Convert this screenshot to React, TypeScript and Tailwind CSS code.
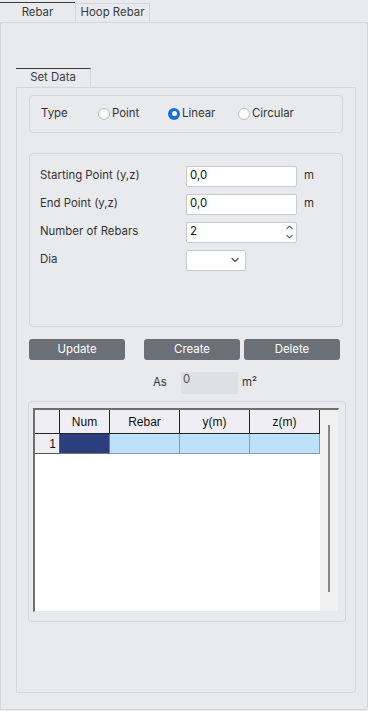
import { ChevronDown, ChevronUp } from "lucide-react"

const ui = "font-['Inter','Noto_Sans',sans-serif]"

function Radio({ label, checked }: { label: string; checked?: boolean }) {
  return (
    <label className="flex items-center gap-[2px]">
      {checked ? (
        <span className="w-[12px] h-[12px] rounded-full bg-[#1a6fe0] flex items-center justify-center">
          <span className="w-[5px] h-[5px] rounded-full bg-white" />
        </span>
      ) : (
        <span className="w-[12px] h-[12px] rounded-full bg-white border border-[#bcbcc0]" />
      )}
      <span>{label}</span>
    </label>
  )
}

function Field({ label, children }: { label: string; children: React.ReactNode }) {
  return (
    <div className="flex items-center h-[20px]">
      <span className="w-[146px] shrink-0">{label}</span>
      {children}
    </div>
  )
}

const cols = [
  { name: 'Num', w: 'w-[50px]' },
  { name: 'Rebar', w: 'w-[70px]' },
  { name: 'y(m)', w: 'w-[70px]' },
  { name: 'z(m)', w: 'w-[70px]' },
]

export default function App() {
  return (
    <div className={`w-[368px] h-[711px] bg-[#e9eaee] text-[11.4px] text-[#333] ${ui}`}>
      {/* Top tabs */}
      <div className="flex h-[22px] pt-[2px]">
        <div className="w-[75px] border-t-[1.5px] border-[#3a3a3a] bg-[#e9eaee] flex items-center justify-center text-[#3b3b40]">
          Rebar
        </div>
        <div className="w-[75px] mt-[1px] border border-b-0 border-[#d4d6db] flex items-center justify-center text-[#3b3b40]">
          Hoop Rebar
        </div>
      </div>

      {/* Outer panel */}
      <div className="h-[688px] border border-[#d4d6db] rounded-br-[4px] pl-[15px] pt-[45px]">
        <div className="w-[75px] h-[19px] border-t-[1.5px] border-[#3a3a3a] border-r border-r-[#d4d6db] flex items-center justify-center text-[#3b3b40]">
          Set Data
        </div>

        <div className="w-[340px] h-[606px] border border-[#d4d6db] rounded-br-[4px] pl-[12px] pt-[7px]">
          {/* Type */}
          <div className="w-[314px] h-[38px] border border-[#d4d6db] rounded-[4px] flex items-center pl-[11px]">
            <span className="w-[57px]">Type</span>
            <div className="w-[70px]"><Radio label="Point" /></div>
            <div className="w-[70px]"><Radio label="Linear" checked /></div>
            <Radio label="Circular" />
          </div>

          {/* Data */}
          <div className="mt-[20px] w-[314px] h-[174px] border border-[#d4d6db] rounded-[4px] pl-[10px] pt-[12px] flex flex-col gap-[8px]">
            <Field label="Starting Point (y,z)">
              <div className="w-[111px] h-[21px] bg-white border border-[#c9cbd0] rounded-[2px] px-[3px] flex items-center text-[#111]">0,0</div>
              <span className="ml-[7px]">m</span>
            </Field>
            <Field label="End Point (y,z)">
              <div className="w-[111px] h-[21px] bg-white border border-[#c9cbd0] rounded-[2px] px-[3px] flex items-center text-[#111]">0,0</div>
              <span className="ml-[7px]">m</span>
            </Field>
            <Field label="Number of Rebars">
              <div className="w-[111px] h-[21px] bg-white border border-[#c9cbd0] rounded-[2px] pl-[3px] flex items-center text-[#111]">
                <span className="flex-1">2</span>
                <span className="flex flex-col items-center pr-[1px] text-[#666]">
                  <ChevronUp size={11} strokeWidth={2.5} className="-mb-[2px]" />
                  <ChevronDown size={11} strokeWidth={2.5} />
                </span>
              </div>
            </Field>
            <Field label="Dia">
              <div className="w-[60px] h-[21px] bg-white border border-[#c9cbd0] rounded-[2px] flex items-center justify-end pr-[4px] text-[#555]">
                <ChevronDown size={12} strokeWidth={2.5} />
              </div>
            </Field>
          </div>

          {/* Buttons */}
          <div className="mt-[12px] flex h-[21px] text-white">
            <button className="w-[96px] rounded-[3px] bg-[#6b7077]">Update</button>
            <button className="ml-[19px] w-[96px] rounded-[3px] bg-[#6b7077]">Create</button>
            <button className="ml-[4px] w-[96px] rounded-[3px] bg-[#6b7077]">Delete</button>
          </div>

          {/* As */}
          <div className="mt-[12px] flex items-center h-[22px]">
            <span className="ml-[124px] w-[28px]">As</span>
            <div className="w-[57px] h-[22px] bg-[#dfe0e4] pl-[2px] text-[#555] leading-[14px]">0</div>
            <span className="ml-[4px]">m²</span>
          </div>

          {/* Table */}
          <div className="mt-[7px] -ml-[1px] w-[318px] h-[221px] border border-[#d4d6db] rounded-[4px] pl-[4px] pt-[6px]">
            <div className="w-[306px] h-[204px] bg-white border-t-2 border-l-2 border-[#6e6e6e] border-r border-b border-r-[#e8e8e8] border-b-[#e8e8e8] flex font-['Liberation_Sans',Arial,sans-serif] text-[12px] text-[#111]">
              <div className="w-[285px]">
                <div className="flex h-[24px] bg-[#eeeef3]">
                  <div className="w-[25px] border-r border-b border-[#222]" />
                  {cols.map(c => (
                    <div key={c.name} className={`${c.w} border-r border-b border-[#222] flex items-center justify-center`}>
                      {c.name}
                    </div>
                  ))}
                </div>
                <div className="flex h-[20px]">
                  <div className="w-[25px] bg-[#eeeef3] border-r border-b border-[#555] flex items-center justify-end pr-[3px]">1</div>
                  <div className="w-[50px] bg-[#2b3f7e] border-r border-b border-[#777]" />
                  <div className="w-[70px] bg-[#bde0fb] border-r border-b border-[#8a9aa8]" />
                  <div className="w-[70px] bg-[#bde0fb] border-r border-b border-[#8a9aa8]" />
                  <div className="w-[70px] bg-[#bde0fb] border-r border-b border-[#8a9aa8]" />
                </div>
              </div>
              <div className="flex-1 bg-[#f0f0f0] flex justify-center pt-[15px]">
                <div className="w-[2px] h-[167px] bg-[#858585]" />
              </div>
            </div>
          </div>
        </div>
      </div>
    </div>
  )
}
